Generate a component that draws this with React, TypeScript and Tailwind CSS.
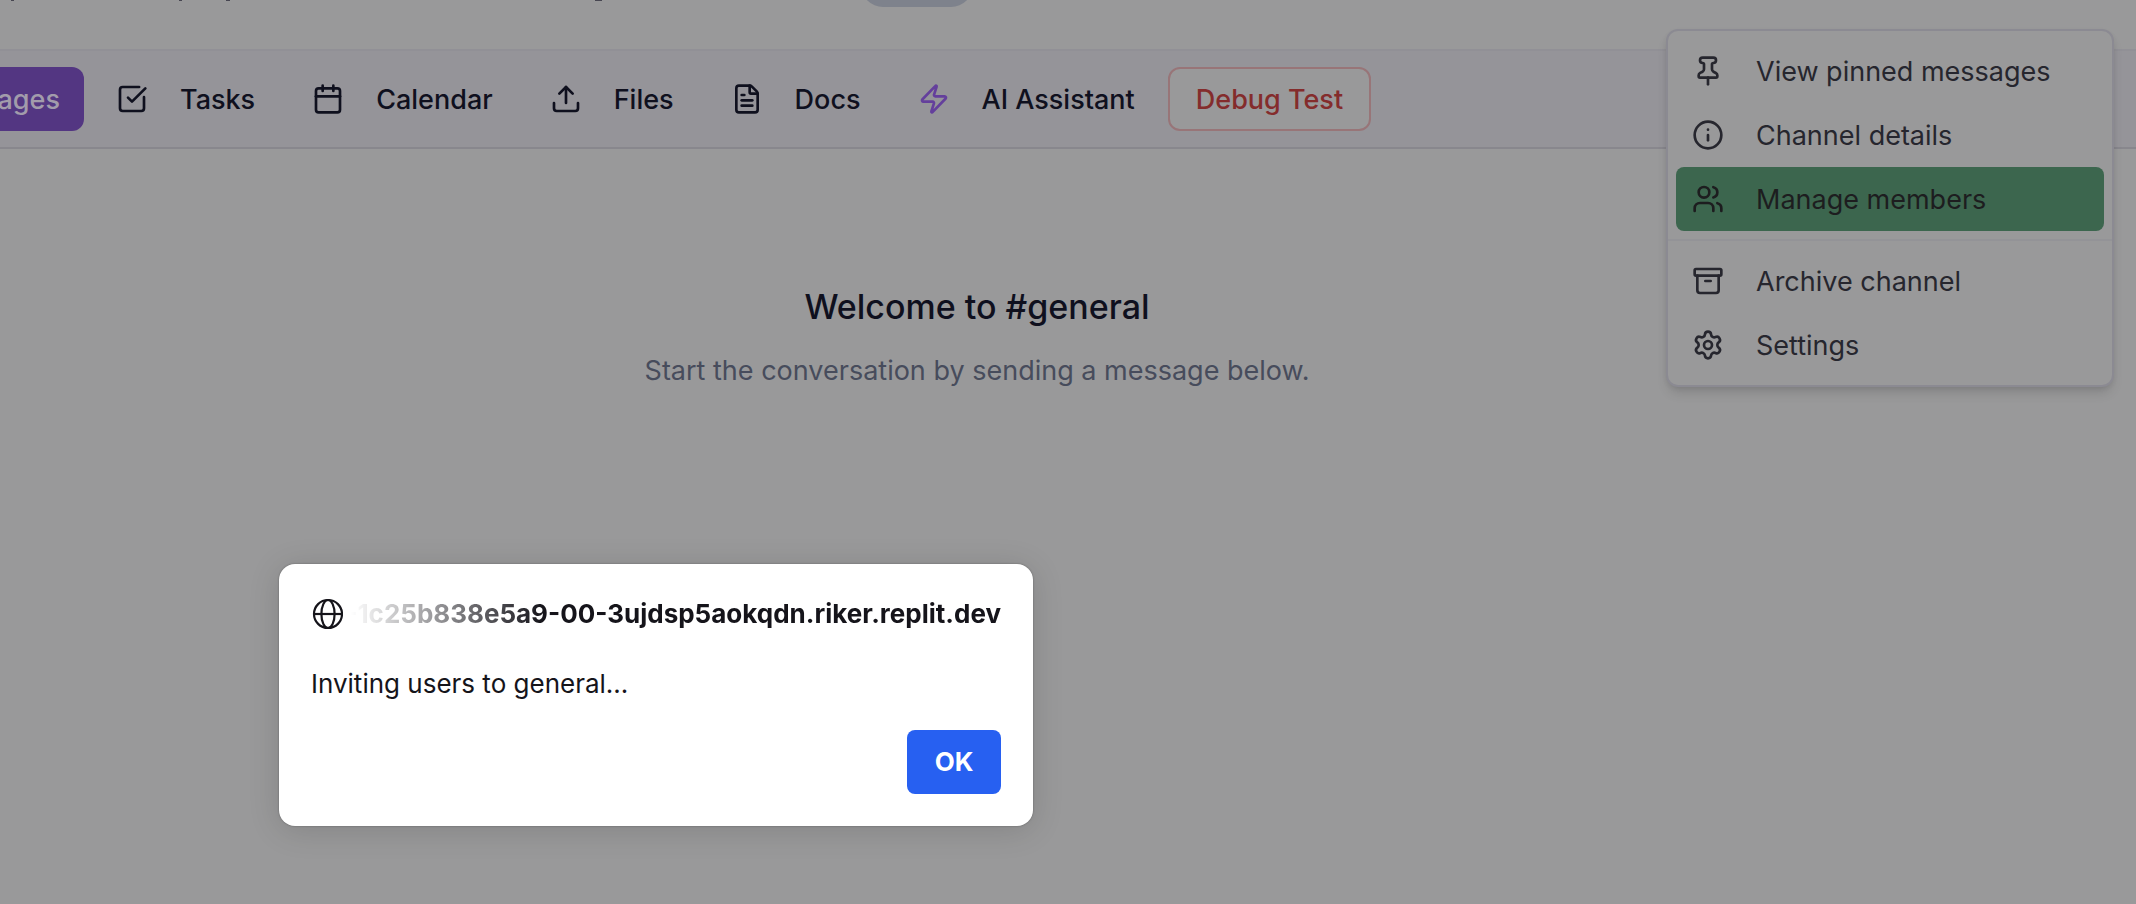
import {
  Archive, Calendar, FileText, Info, Pin, Settings, SquareCheckBig, Upload, Users, Zap,
} from "lucide-react";

const tabs = [
  { label: "Tasks", icon: SquareCheckBig, tone: "text-[#0f101e]" },
  { label: "Calendar", icon: Calendar, tone: "text-[#0f101e]" },
  { label: "Files", icon: Upload, tone: "text-[#0f101e]" },
  { label: "Docs", icon: FileText, tone: "text-[#0f101e]" },
  { label: "AI Assistant", icon: Zap, tone: "text-[#643f9c]" },
];

const itemClass = "flex h-16 w-full items-center gap-8 rounded-lg px-4 text-left";

function MenuItem({ label, icon: Icon, active = false }: { label: string; icon: typeof Pin; active?: boolean }) {
  return (
    <button role="menuitem" className={active ? `${itemClass} bg-[#3c664e] text-[#1d1d1f]` : `${itemClass} text-[#26262e]`}>
      <Icon className="size-8 shrink-0" />
      <span className="pt-0.5">{label}</span>
    </button>
  );
}

function ChannelMenu() {
  return (
    <div role="menu" className="absolute top-[29px] right-[22px] w-[448px] rounded-xl border-2 border-[#8b8a92] bg-[#99999a] p-2 text-[27px] leading-10 shadow-[0_8px_12px_-2px_rgba(0,0,0,0.12),0_2px_6px_-2px_rgba(0,0,0,0.12)]">
      <MenuItem label="View pinned messages" icon={Pin} />
      <MenuItem label="Channel details" icon={Info} />
      <MenuItem label="Manage members" icon={Users} active />
      <div role="separator" className="-mx-2 my-2 h-0.5 bg-[#939397]" />
      <MenuItem label="Archive channel" icon={Archive} />
      <MenuItem label="Settings" icon={Settings} />
    </div>
  );
}

function AlertDialog() {
  return (
    <div role="alertdialog" aria-labelledby="alert-host" aria-describedby="alert-text" className="absolute top-[564px] left-[279px] w-[754px] rounded-2xl bg-white p-8 text-[26px] leading-9 text-[#15141a] shadow-[0_4px_32px_rgba(0,0,0,0.14),0_0_2px_rgba(0,0,0,0.35)]">
      <div className="flex items-center">
        <svg viewBox="-1 0 32 32" className="size-8 shrink-0" fill="none" stroke="currentColor" strokeWidth="2.2">
          <circle cx="16" cy="16" r="14" />
          <ellipse cx="16" cy="16" rx="6.6" ry="14" />
          <path d="M2 16h28" />
        </svg>
        <h2 id="alert-host" className="flex min-w-0 flex-1 justify-end overflow-hidden font-bold whitespace-nowrap [mask-image:linear-gradient(to_right,transparent_8px,black_200px)]">
          -1c25b838e5a9-00-3ujdsp5aokqdn.riker.replit.dev
        </h2>
      </div>
      <p id="alert-text" className="mt-[34px]">Inviting users to general...</p>
      <div className="mt-7 flex justify-end">
        <button className="h-16 w-[94px] rounded-lg bg-[#2760f1] font-bold text-white">OK</button>
      </div>
    </div>
  );
}

export default function App() {
  return (
    <div className="relative flex min-h-screen flex-col overflow-hidden bg-[#99999a] font-['Inter',sans-serif]">
      <header className="flex h-[51px] items-start border-b-2 border-[#919096]">
        <svg viewBox="0 0 861 2" className="h-0.5 w-[861px] shrink-0" stroke="#474651" strokeWidth="1" aria-hidden="true">
          <path d="M11 .5h3M179 .5h3M226 .5h4M595 .5h7" />
        </svg>
        <span className="-mt-[37px] h-11 w-28 rounded-full bg-[#7e828c]" />
      </header>
      <nav className="flex h-[98px] items-center gap-2 border-b-2 border-[#88878d] bg-[#959499] text-[27px] leading-10 font-medium text-[#0f101e]">
        <button className="flex h-16 w-[84px] items-center justify-end overflow-hidden rounded-r-xl bg-[#533682] pr-6 text-[#a29cab]">
          <span className="pt-0.5">Messages</span>
        </button>
        {tabs.map(({ label, icon: Icon, tone }) => (
          <button key={label} className="flex h-16 items-center gap-8 pr-[25px] pl-6 whitespace-nowrap">
            <Icon className={`size-8 shrink-0 ${tone}`} />
            <span className="pt-0.5">{label}</span>
          </button>
        ))}
        <button className="h-16 rounded-xl border-2 border-[#987578] bg-[#99999a] px-[26px] whitespace-nowrap text-[#842c2c]">
          <span className="block pt-0.5">Debug Test</span>
        </button>
      </nav>
      <main className="flex flex-1 flex-col items-center gap-4 pt-[130px] pr-[182px] text-center">
        <h1 className="text-[34px] leading-[56px] font-medium text-[#0f101e]">Welcome to #general</h1>
        <p className="text-[27px] leading-10 text-[#474c5c]">Start the conversation by sending a message below.</p>
      </main>
      <ChannelMenu />
      <AlertDialog />
    </div>
  );
}
